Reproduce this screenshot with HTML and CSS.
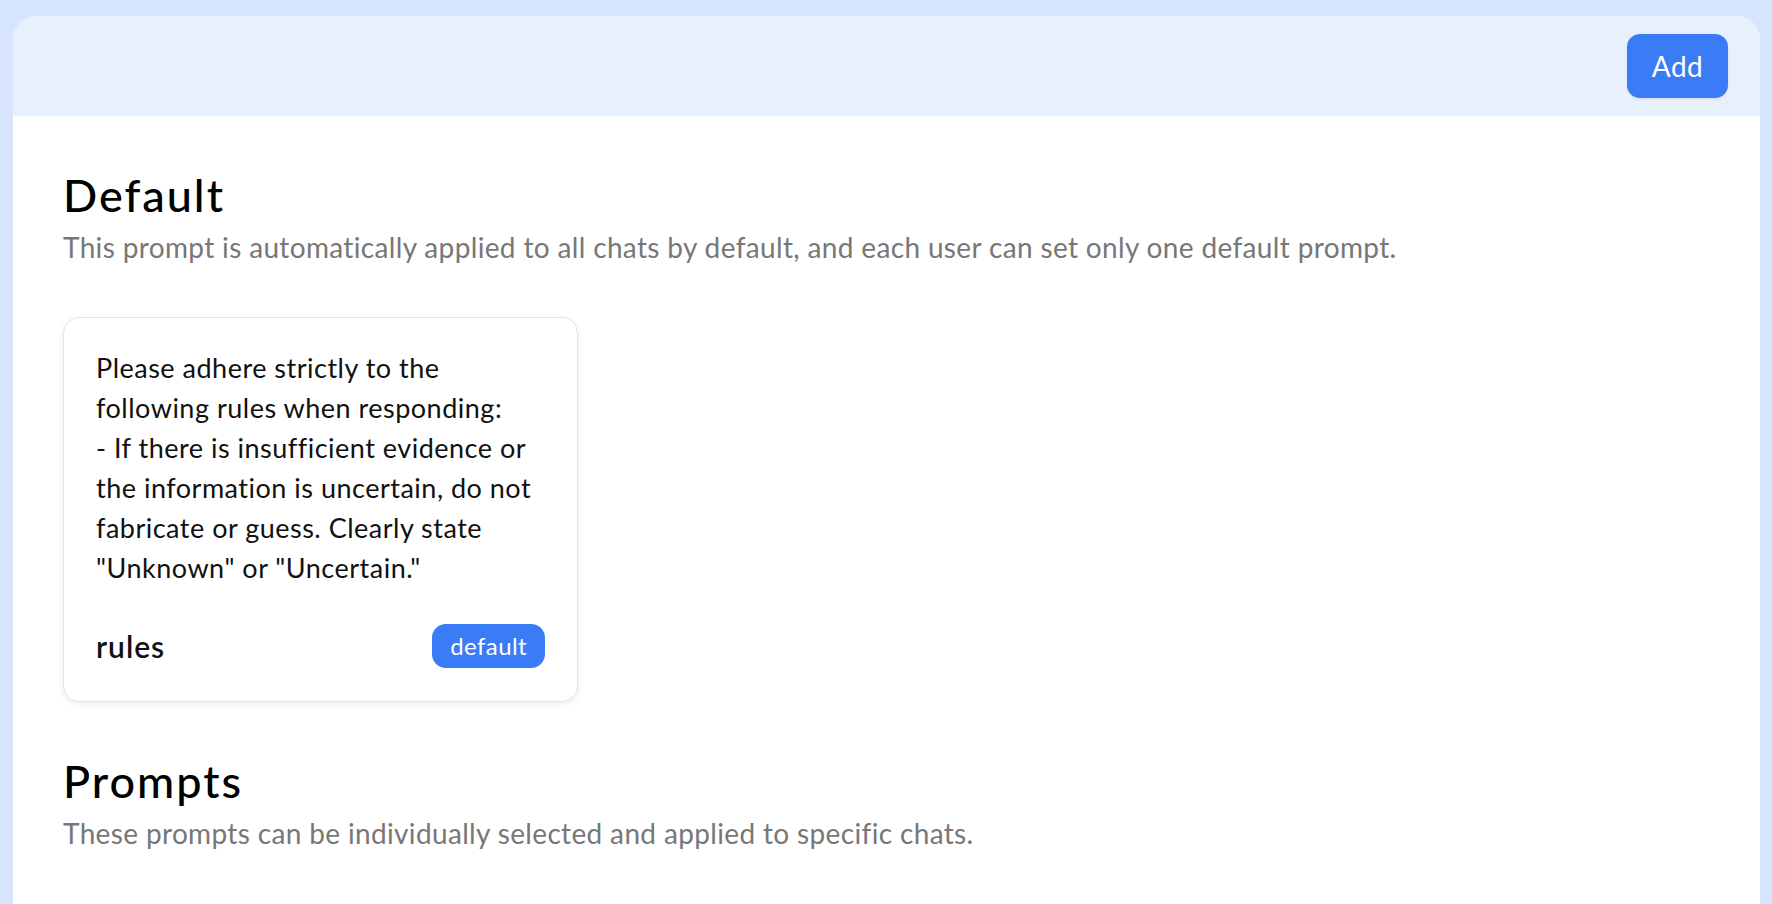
FILE: index.html
```html
<!DOCTYPE html>
<html lang="en">
<head>
<meta charset="utf-8">
<title>Prompts</title>
<link rel="stylesheet" href="styles.css">
</head>
<body>
<div class="app">
  <div class="panel">
    <header class="header">
      <button class="btn-add">Add</button>
    </header>
    <main class="content">
      <section class="section">
        <h2 class="section-title">Default</h2>
        <p class="section-desc">This prompt is automatically applied to all chats by default, and each user can set only one default prompt.</p>
        <div class="cards">
          <div class="card">
            <p class="card-text">Please adhere strictly to the following rules when responding:
- If there is insufficient evidence or the information is uncertain, do not fabricate or guess. Clearly state "Unknown" or "Uncertain."</p>
            <div class="card-footer">
              <span class="card-name">rules</span>
              <span class="badge">default</span>
            </div>
          </div>
        </div>
      </section>
      <section class="section">
        <h2 class="section-title">Prompts</h2>
        <p class="section-desc">These prompts can be individually selected and applied to specific chats.</p>
      </section>
    </main>
  </div>
</div>
</body>
</html>
```
FILE: styles.css
```css
html, body {
  margin: 0;
  padding: 0;
  height: 100%;
}
body {
  background: #d6e4fe;
  font-family: Lato, "Noto Sans", sans-serif;
  color: #111;
  overflow: hidden;
}
.app {
  box-sizing: border-box;
  height: 100vh;
  padding: 16px 12px 0 13px;
}
.panel {
  background: #fff;
  border-radius: 24px 24px 0 0;
  height: 100%;
  overflow: hidden;
}
.header {
  height: 100px;
  background: #e8effd;
  display: flex;
  justify-content: flex-end;
  align-items: center;
  padding: 0 32px;
}
.btn-add {
  width: 101px;
  height: 64px;
  border: none;
  border-radius: 13px;
  background: #3a7bf6;
  color: #fff;
  font-family: inherit;
  font-size: 28px;
  letter-spacing: 0.5px;
  box-shadow: 0 1px 3px rgba(0,0,0,0.08);
  cursor: pointer;
}
.content {
  padding: 0 50px;
}
.section {
  padding-top: 52px;
}
.section-title {
  margin: 0;
  font-size: 45px;
  line-height: 54px;
  font-weight: 500;
  letter-spacing: 2px;
  color: #000;
}
.section-desc {
  margin: 5px 0 0;
  font-size: 28px;
  line-height: 40px;
  letter-spacing: 0.35px;
  color: #777;
}
.cards {
  display: flex;
  margin-top: 50px;
}
.card {
  box-sizing: border-box;
  width: 515px;
  border: 1px solid #e3e3e3;
  border-radius: 16px;
  box-shadow: 0 2px 6px rgba(0,0,0,0.08);
  padding: 30px 32px 33px;
}
.card-text {
  margin: 0;
  white-space: pre-line;
  font-size: 27px;
  line-height: 40px;
  letter-spacing: 0.5px;
  color: #111;
}
.card-footer {
  margin-top: 36px;
  display: flex;
  justify-content: space-between;
  align-items: center;
}
.card-name {
  font-size: 30px;
  font-weight: 600;
  letter-spacing: 1px;
  color: #111;
}
.badge {
  height: 44px;
  line-height: 44px;
  padding: 0 18px;
  border-radius: 14px;
  background: #3a7bf6;
  color: #fff;
  font-size: 24px;
  letter-spacing: 0.4px;
}
```
